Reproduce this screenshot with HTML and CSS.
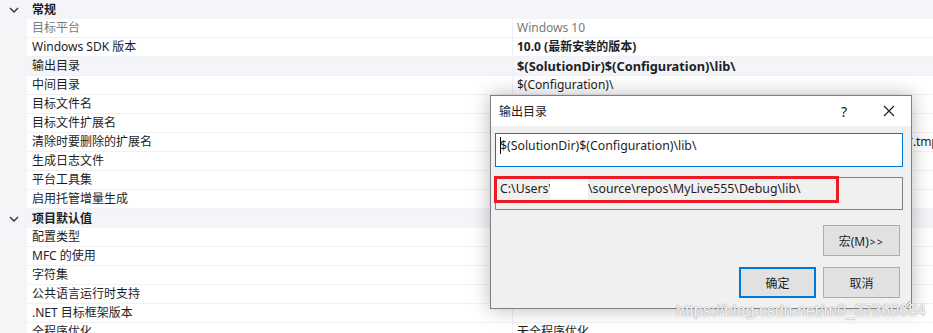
FILE: index.html
```html
<!DOCTYPE html>
<html>
<head>
<meta charset="utf-8">
<link rel="stylesheet" href="styles.css">
</head>
<body>
<div class="grid">
  <div class="row header">
    <div class="gutter"><svg class="chev" width="10" height="6" viewBox="0 0 10 6"><polyline points="1,1 5,5 9,1" fill="none" stroke="#333" stroke-width="1.4"/></svg></div>
    <div class="hlabel">常规</div>
  </div>
  <div class="row"><div class="gutter"></div><div class="label muted">目标平台</div><div class="value muted">Windows 10</div></div>
  <div class="row"><div class="gutter"></div><div class="label">Windows SDK 版本</div><div class="value bold">10.0 (最新安装的版本)</div></div>
  <div class="row selected"><div class="gutter"></div><div class="label">输出目录</div><div class="value bold path">$(SolutionDir)$(Configuration)\lib\</div></div>
  <div class="row"><div class="gutter"></div><div class="label">中间目录</div><div class="value">$(Configuration)\</div></div>
  <div class="row"><div class="gutter"></div><div class="label">目标文件名</div><div class="value">$(ProjectName)</div></div>
  <div class="row"><div class="gutter"></div><div class="label">目标文件扩展名</div><div class="value">.lib</div></div>
  <div class="row"><div class="gutter"></div><div class="label">清除时要删除的扩展名</div><div class="value ext">*.cdf;*.cache;*.obj;*.obj.enc;*.ilk;*.ipdb;*.iobj;*.resources;*.tlb;*.tli;*.tlh;*.tmp;*.rsp;*.pgc;*.pgd</div></div>
  <div class="row"><div class="gutter"></div><div class="label">生成日志文件</div><div class="value">$(IntDir)$(MSBuildProjectName).log</div></div>
  <div class="row"><div class="gutter"></div><div class="label">平台工具集</div><div class="value">Visual Studio 2019 (v142)</div></div>
  <div class="row"><div class="gutter"></div><div class="label">启用托管增量生成</div><div class="value">否</div></div>
  <div class="row header">
    <div class="gutter"><svg class="chev" width="10" height="6" viewBox="0 0 10 6"><polyline points="1,1 5,5 9,1" fill="none" stroke="#333" stroke-width="1.4"/></svg></div>
    <div class="hlabel">项目默认值</div>
  </div>
  <div class="row"><div class="gutter"></div><div class="label">配置类型</div><div class="value">静态库(.lib)</div></div>
  <div class="row"><div class="gutter"></div><div class="label">MFC 的使用</div><div class="value">使用标准 Windows 库</div></div>
  <div class="row"><div class="gutter"></div><div class="label">字符集</div><div class="value">使用 Unicode 字符集</div></div>
  <div class="row"><div class="gutter"></div><div class="label">公共语言运行时支持</div><div class="value">无公共语言运行时支持</div></div>
  <div class="row"><div class="gutter"></div><div class="label">.NET 目标框架版本</div><div class="value"></div></div>
  <div class="row"><div class="gutter"></div><div class="label">全程序优化</div><div class="value">无全程序优化</div></div>
</div>

<div class="dialog">
  <div class="titlebar">
    <span class="title">输出目录</span>
    <span class="help">?</span>
    <svg class="close" width="12" height="12" viewBox="0 0 12 12"><path d="M1 1L11 11M11 1L1 11" stroke="#222" stroke-width="1.2" fill="none"/></svg>
  </div>
  <div class="dbody">
    <div class="editbox"><span class="caret"></span>$(SolutionDir)$(Configuration)\lib\</div>
    <div class="evalbox">C:\Users\<span class="redact"></span>\source\repos\MyLive555\Debug\lib\<span class="redbox"></span></div>
    <div class="btnrow"><button class="btn">宏(M)<span class="gt">&gt;&gt;</span></button></div>
    <div class="btnrow"><button class="btn primary">确定</button><button class="btn">取消</button></div>
    <svg class="grip" width="10" height="10" viewBox="0 0 10 10"><path d="M9 3L3 9M9 6L6 9" stroke="#999" stroke-width="1"/></svg>
  </div>
</div>
<div class="watermark">https://blog.csdn.net/m0_37360684</div>
</body>
</html>
```

FILE: styles.css
```css
html, body {
  margin: 0;
  padding: 0;
  background: #ffffff;
  overflow: hidden;
}
body {
  width: 933px;
  height: 333px;
  position: relative;
  font-family: "Noto Sans", "Noto Sans CJK SC", sans-serif;
  font-size: 12px;
  color: #1e1e1e;
}
.grid {
  display: flex;
  flex-direction: column;
}
.row {
  display: grid;
  grid-template-columns: 27px 485px 1fr;
  height: 19px;
  box-sizing: border-box;
  border-bottom: 1px solid #f0f0f5;
  line-height: 18px;
  white-space: nowrap;
}
.row.header {
  grid-template-columns: 27px 1fr;
  background: #f3f5f9;
  border-bottom: none;
}
.row.selected {
  background: #f3f5f9;
}
.gutter {
  background: #f5f5f7;
  display: flex;
  align-items: center;
  justify-content: center;
  margin-bottom: -1px;
}
.row.header .gutter { background: #f3f5f9; }
.chev { margin-left: 1px; }
.label {
  padding-left: 5px;
  overflow: hidden;
}
.hlabel {
  padding-left: 5px;
  font-weight: bold;
  padding-top: 1px;
}
.value {
  border-left: 1px solid #f0f0f5;
  padding-left: 4px;
  overflow: hidden;
}
.muted { color: #7a7a7a; }
.bold { font-weight: bold; }
.bold.path { font-size: 12.8px; }
.ext { letter-spacing: -0.2px; }

.dialog {
  position: absolute;
  left: 490px;
  top: 95px;
  width: 422px;
  height: 214px;
  box-sizing: border-box;
  border: 1px solid #7f7f7f;
  background: #f0f0f0;
  box-shadow: 0 0 18px rgba(0,0,0,0.28);
  display: flex;
  flex-direction: column;
}
.titlebar {
  height: 30px;
  background: #ffffff;
  display: flex;
  align-items: center;
  padding-left: 8px;
  padding-right: 16px;
  flex-shrink: 0;
}
.title { flex: 1; font-size: 12px; }
.help { font-size: 14px; margin-right: 36px; color: #222; }
.dbody {
  flex: 1;
  padding: 7px 11px 0 4px;
  display: flex;
  flex-direction: column;
  position: relative;
}
.editbox {
  height: 34px;
  width: 408px;
  box-sizing: border-box;
  border: 1px solid #0078d7;
  background: #ffffff;
  padding: 3px 0 0 4px;
  font-size: 12.3px;
  line-height: 17px;
  display: flex;
  white-space: nowrap;
}
.caret {
  display: inline-block;
  width: 1px;
  height: 17px;
  background: #000;
  margin-right: -1px;
}
.evalbox {
  margin-top: 10px;
  height: 33px;
  width: 408px;
  box-sizing: border-box;
  border: 1px solid #828282;
  padding: 1px 0 0 4px;
  font-size: 12.3px;
  line-height: 20px;
  position: relative;
  white-space: nowrap;
}
.redact {
  display: inline-block;
  width: 38px;
  height: 20px;
  background: #ffffff;
  vertical-align: top;
  margin-left: -3px;
}
.redbox {
  position: absolute;
  left: -2px;
  top: -2px;
  width: 345px;
  height: 27px;
  box-sizing: border-box;
  border: 3px solid #ed1c24;
}
.btnrow {
  display: flex;
  justify-content: flex-end;
  gap: 7px;
  margin-top: 15px;
}
.btnrow + .btnrow { margin-top: 11px; }
.btn {
  width: 77px;
  height: 31px;
  box-sizing: border-box;
  border: 1px solid #adadad;
  background: #e1e1e1;
  font-family: "Noto Sans", "Noto Sans CJK SC", sans-serif;
  font-size: 12px;
  color: #1e1e1e;
  padding: 0;
}
.gt { font-size: 10px; letter-spacing: 1.5px; margin-left: 1px; }
.btn.primary {
  border: 2px solid #0078d7;
}
.grip {
  position: absolute;
  right: 0;
  bottom: 0;
}
.watermark {
  position: absolute;
  left: 676px;
  top: 302px;
  font-family: "Liberation Sans", sans-serif;
  font-size: 16px;
  color: rgba(255,255,255,0.9);
  text-shadow: 0 0 1px #999, 0 0 1px #aaa;
}
```
